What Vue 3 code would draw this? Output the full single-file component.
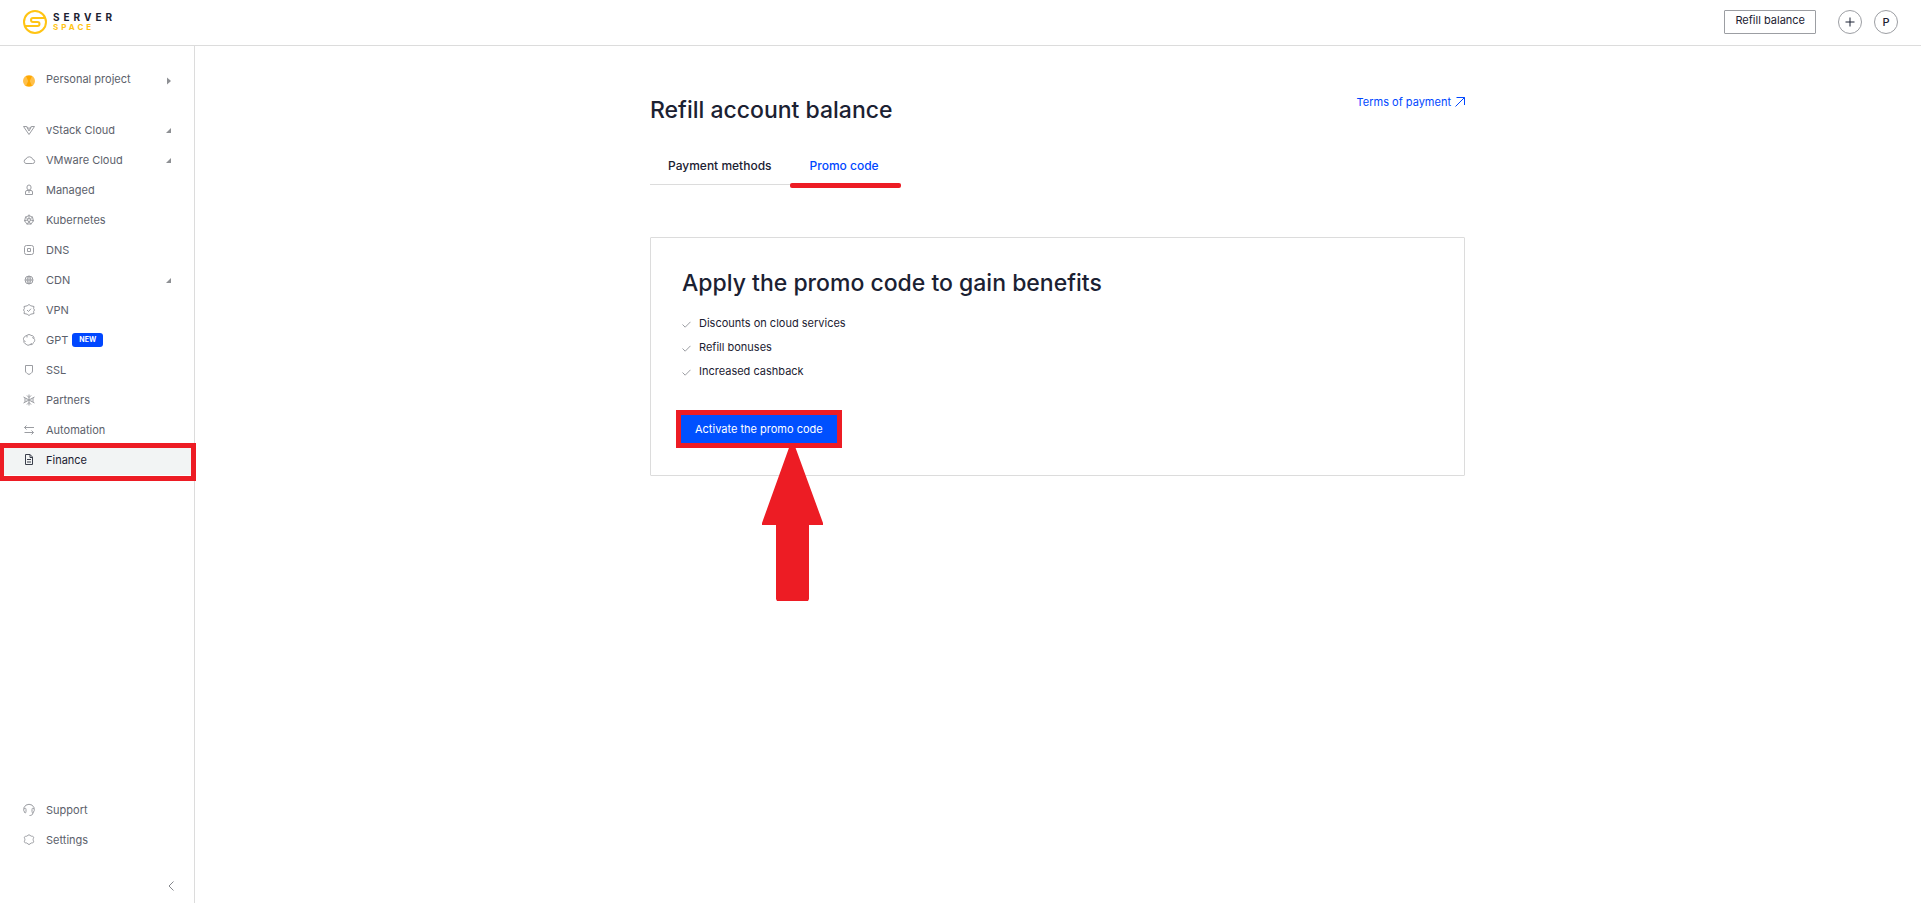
<script setup>
import { ref } from 'vue'

const mainItems = [
  { id: 'vstack', label: 'vStack Cloud', expandable: true },
  { id: 'vmware', label: 'VMware Cloud', expandable: true },
  { id: 'managed', label: 'Managed' },
  { id: 'kubernetes', label: 'Kubernetes' },
  { id: 'dns', label: 'DNS' },
  { id: 'cdn', label: 'CDN', expandable: true },
  { id: 'vpn', label: 'VPN' },
  { id: 'gpt', label: 'GPT', badge: 'NEW' },
  { id: 'ssl', label: 'SSL' },
  { id: 'partners', label: 'Partners' },
  { id: 'automation', label: 'Automation' },
  { id: 'finance', label: 'Finance', active: true },
]
const footItems = [
  { id: 'support', label: 'Support' },
  { id: 'settings', label: 'Settings' },
]
const icons = {
  vstack: 'M1.5 3.5h3L7 8l2.500-4.500h3L7 11.500zM4.500 3.500L7 5.500l2.500-2',
  vmware: 'M4 10.500h6.500a2 2 0 0 0 .3-4A3.600 3.600 0 0 0 4 6a2.300 2.300 0 0 0 0 4.500z',
  managed: 'M7 2a2 2 0 0 1 2 2v1a2 2 0 0 1-4 0V4a2 2 0 0 1 2-2zM5 7.500h4a1.500 1.500 0 0 1 1.500 1.500v2.500h-7V9A1.500 1.500 0 0 1 5 7.500zM7 8v2',
  kubernetes: 'M7 2.500l3.500 1.700.9 3.700L9 11H5L2.600 7.900l.9-3.700zM7 5.500a1.500 1.500 0 1 0 0 3 1.500 1.500 0 0 0 0-3zM7 1.500v4M7 8.500l-2 3M7 8.500l2 3M5.500 7l-3.500.8M8.500 7l3.500.8M5.800 6L3 3.700M8.200 6L11 3.700',
  dns: 'M4.500 2.500h5a2 2 0 0 1 2 2v5a2 2 0 0 1-2 2h-5a2 2 0 0 1-2-2v-5a2 2 0 0 1 2-2zM5.500 5.500h3v3h-3z',
  cdn: 'M7 3a4 4 0 1 0 0 8 4 4 0 0 0 0-8zM3 7h8M7 3v8M7 3C4.500 5 4.500 9 7 11M7 3c2.500 2 2.500 6 0 8',
  vpn: 'M7 1.500l1.800 1.300 3.200.7-.4 2L12.500 7l-.9 1.500.4 2-3.200.7L7 12.500l-1.800-1.300-3.200-.7.4-2L1.500 7l.9-1.500-.4-2 3.200-.7zM5 7l1.500 1.500L9 5.700',
  gpt: 'M5 2.500a2.600 2.600 0 0 1 4 0 2.600 2.600 0 0 1 3 3 2.600 2.600 0 0 1-.5 4 2.600 2.600 0 0 1-3.500 2 2.600 2.600 0 0 1-4-.5 2.600 2.600 0 0 1-2-3.500 2.600 2.600 0 0 1 1-4A2.600 2.600 0 0 1 5 2.500zM5 2.500v2M12 5.500l-1.800-1M8 11.500l2-1M2 7.500l1.500 1.500',
  ssl: 'M3.500 2.500h7V8c0 2-2 2.500-3.500 3.500C5.500 10.500 3.500 10 3.500 8z',
  partners: 'M7 1.500v11M1.500 4l11 6M1.500 10l11-6M5 2.500l2 2 2-2M5 11.500l2-2 2 2M2 6h2.500M2 8h2.500M9.500 6H12M9.500 8H12',
  automation: 'M12 4.500H2.500M4.500 2.500l-2 2 2 2M2.500 9.500h9M9.500 7.500l2 2-2 2',
  finance: 'M3.500 1.500h4.500l2.500 2.500v7.500h-7zM8 1.500V4.500h2.500M5 6.500h4M5 9h4',
  support: 'M3 10A5.500 5.500 0 0 1 2 4.500a5.500 5.500 0 0 1 10 0A5.500 5.500 0 0 1 11 10C10.500 12 9.500 12.500 7.500 12.500M2 5.500c1.500-.8 2 0 2 1v2c0 1-.5 1.500-1 1.500M12 5.500c-1.500-.8-2 0-2 1v2c0 1 .5 1.500 1 1.500',
  settings: 'M7 1.800c1 0 1.200 1 2 1.300s2-.1 2.500.8-.4 1.600-.4 2.600.9 2 .4 2.800-1.700.4-2.500.8-1 1.400-2 1.400-1.200-1-2-1.400-2 .1-2.500-.8.400-1.800.4-2.800-.9-1.700-.4-2.600 1.700-.4 2.500-.8 1-1.300 2-1.300z',
}
const tabs = ['Payment methods', 'Promo code']
const current = ref('Promo code')
const benefits = ['Discounts on cloud services', 'Refill bonuses', 'Increased cashback']
</script>

<template>
  <div class="page">
    <header class="topbar">
      <a class="logo" href="#" aria-label="Serverspace">
        <svg class="logo-mark" viewBox="0 0 24 24" aria-hidden="true">
          <circle cx="12" cy="12" r="11" />
          <path d="M22 8H10a2 2 0 0 0 0 4h4.500a2 2 0 0 1 0 4H2" />
        </svg>
        <span class="logo-text">
          <span class="logo-top">SERVER</span>
          <span class="logo-bottom">SPACE</span>
        </span>
      </a>
      <div class="actions">
        <button class="refill" type="button">Refill balance</button>
        <button class="round" type="button" aria-label="Create">
          <svg viewBox="0 0 10 10" aria-hidden="true"><path d="M5 .5v9M.5 5h9" /></svg>
        </button>
        <button class="round" type="button">P</button>
      </div>
    </header>

    <div class="body">
      <aside class="sidebar">
        <button class="item project" type="button">
          <svg class="coin" viewBox="0 0 12 12" aria-hidden="true">
            <circle cx="6" cy="6" r="6" fill="#ffc04a" />
            <path d="M3 1h6L6.800 6 9 11H3l2.200-5z" fill="#ffa800" />
          </svg>
          <span>Personal project</span>
          <svg class="caret" viewBox="0 0 5 8" aria-hidden="true"><path d="M1 .5L5 4 1 7.500z" /></svg>
        </button>
        <nav class="nav" aria-label="Services">
          <a v-for="item in mainItems" :key="item.id" href="#" class="item" :class="{ active: item.active }">
            <svg class="icon" viewBox="0 0 14 14" aria-hidden="true"><path :d="icons[item.id]" /></svg>
            <span>{{ item.label }}</span>
            <span v-if="item.badge" class="badge">{{ item.badge }}</span>
            <svg v-if="item.expandable" class="caret" viewBox="0 0 5 5" aria-hidden="true"><path d="M5 0v5H0z" /></svg>
          </a>
        </nav>
        <nav class="nav foot" aria-label="Help">
          <a v-for="item in footItems" :key="item.id" href="#" class="item">
            <svg class="icon" viewBox="0 0 14 14" aria-hidden="true"><path :d="icons[item.id]" /></svg>
            <span>{{ item.label }}</span>
          </a>
        </nav>
        <button class="collapse" type="button" aria-label="Collapse menu">
          <svg viewBox="0 0 6 10" aria-hidden="true"><path d="M5.500.5L1 5l4.500 4.500" /></svg>
        </button>
      </aside>

      <main class="main">
        <div class="content">
          <div class="heading">
            <h1>Refill account balance</h1>
            <a class="terms" href="#">
              Terms of payment
              <svg viewBox="0 0 10 10" aria-hidden="true"><path d="M.5 9.500l9-9M1.500.5h8v7.500" /></svg>
            </a>
          </div>
          <div class="tabs" role="tablist">
            <button
              v-for="tab in tabs"
              :key="tab"
              type="button"
              role="tab"
              class="tab"
              :class="{ selected: current === tab }"
              :aria-selected="current === tab"
              @click="current = tab"
            >{{ tab }}</button>
          </div>
          <section class="card">
            <h2>Apply the promo code to gain benefits</h2>
            <ul>
              <li v-for="line in benefits" :key="line">
                <svg viewBox="0 0 9 7" aria-hidden="true"><path d="M.5 3.500l2.700 2.700L8.500.8" /></svg>
                {{ line }}
              </li>
            </ul>
            <div class="cta">
              <button type="button">Activate the promo code</button>
              <svg class="arrow" viewBox="0 0 61 156" aria-hidden="true">
                <path d="M28 0h4.500L61 78v2H47v74l-1 2H15l-1-2V80H0v-2z" />
              </svg>
            </div>
          </section>
        </div>
      </main>
    </div>
  </div>
</template>

<style>
body {
  margin: 0;
  background: #fff;
}
</style>

<style scoped>
.page {
  display: flex;
  flex-direction: column;
  min-height: 100vh;
  font-family: Inter, "Liberation Sans", sans-serif;
  font-size: 11px;
  line-height: 16px;
  color: #1b2132;
}
.page * {
  box-sizing: border-box;
}
button {
  margin: 0;
  padding: 0;
  border: 0;
  background: none;
  font: inherit;
  color: inherit;
  cursor: pointer;
}
a {
  color: inherit;
  text-decoration: none;
}
svg {
  display: block;
  flex: none;
  fill: none;
}
.topbar {
  display: flex;
  align-items: center;
  justify-content: space-between;
  height: 46px;
  padding: 0 23px 1px;
  border-bottom: 1px solid #dcdcdc;
}
.logo {
  display: flex;
  align-items: center;
  gap: 6px;
}
.logo-mark {
  width: 24px;
  height: 24px;
  stroke: #ffc414;
  stroke-width: 2;
}
.logo-text {
  display: flex;
  flex-direction: column;
  font-weight: 700;
}
.logo-top {
  font-size: 10px;
  line-height: 11px;
  letter-spacing: 4px;
}
.logo-bottom {
  font-size: 8px;
  line-height: 9px;
  letter-spacing: 3px;
  color: #ffc414;
}
.actions {
  display: flex;
  align-items: center;
  gap: 12px;
}
.refill {
  height: 24px;
  margin-right: 10px;
  padding: 0 10px 4px;
  border: 1px solid #9c9ea3;
  border-radius: 1px;
}
.round {
  display: flex;
  align-items: center;
  justify-content: center;
  width: 24px;
  height: 24px;
  border: 1px solid #9c9ea3;
  border-radius: 50%;
  font-weight: 500;
}
.round svg {
  width: 10px;
  height: 10px;
  stroke: #1b2132;
}
.body {
  display: flex;
  flex: 1;
}
.sidebar {
  display: flex;
  flex-direction: column;
  flex: none;
  width: 195px;
  padding: 18px 0 9px;
  border-right: 1px solid #dcdcdc;
  color: #5c616b;
}
.item {
  position: relative;
  display: flex;
  align-items: center;
  gap: 10px;
  height: 30px;
  padding: 0 23px 0 22px;
  text-align: left;
}
.project {
  margin-bottom: 21px;
}
.coin {
  width: 12px;
  height: 12px;
  margin: 3px 1px 0;
}
.icon {
  width: 14px;
  height: 14px;
  stroke: #9b9da2;
  stroke-width: 1;
}
.caret {
  width: 5px;
  height: 5px;
  margin-left: auto;
  fill: #8e9094;
}
.project .caret {
  height: 8px;
  margin-top: 3px;
}
.badge {
  padding: 0 7px;
  margin-left: -6px;
  border-radius: 3px;
  background: #0047ff;
  color: #fff;
  font-size: 7px;
  font-weight: 700;
  line-height: 14px;
}
.active {
  background: #f2f4f4;
  color: #1b2132;
}
.active .icon {
  stroke: #3a3f4b;
}
.active::after {
  content: "";
  position: absolute;
  inset: -2px -2px -6px 0;
  border: 5px solid #ed1c24;
  border-left-width: 4px;
}
.foot {
  margin-top: auto;
}
.collapse {
  display: flex;
  align-self: flex-end;
  margin: 16px 16px 0;
  padding: 10px 4px 3px;
}
.collapse svg {
  width: 6px;
  height: 10px;
  stroke: #85878c;
}
.main {
  flex: 1;
  padding: 48px 25px 48px 24px;
}
.content {
  max-width: 815px;
  margin: 0 auto;
}
.heading {
  display: flex;
  align-items: flex-start;
  justify-content: space-between;
}
h1,
h2 {
  margin: 0;
  font-size: 23px;
  font-weight: 500;
  line-height: 32px;
}
.terms {
  display: flex;
  align-items: center;
  gap: 4px;
  color: #0047ff;
}
.terms svg {
  width: 10px;
  height: 10px;
  stroke: #0047ff;
}
.tabs {
  display: flex;
  width: fit-content;
  margin-top: 22px;
  border-bottom: 1px solid #dcdcdc;
}
.tab {
  position: relative;
  height: 36px;
  padding: 0 18px;
  font-size: 12px;
  font-weight: 500;
}
.tab.selected {
  padding: 0 22px 0 20px;
  color: #0047ff;
}
.selected::after {
  content: "";
  position: absolute;
  inset: auto 0 -4px 0;
  height: 5px;
  border-radius: 2px;
  background: #ed1c24;
}
.card {
  margin-top: 52px;
  padding: 29px 31px 32px;
  border: 1px solid #dcdcdc;
  border-radius: 1px;
}
ul {
  display: flex;
  flex-direction: column;
  gap: 8px;
  margin: 16px 0 36px;
  padding: 0;
  list-style: none;
}
li {
  display: flex;
  align-items: center;
  gap: 8px;
}
li svg {
  width: 9px;
  height: 7px;
  margin-top: 3px;
  stroke: #9b9da2;
}
.cta {
  position: relative;
  width: fit-content;
  margin-left: -1px;
}
.cta button {
  display: block;
  height: 28px;
  padding: 0 14px;
  background: #0050ff;
  color: #fff;
  outline: 5px solid #ed1c24;
}
.arrow {
  position: absolute;
  left: 81px;
  top: 30px;
  width: 61px;
  height: 156px;
  fill: #ed1c24;
}
</style>
